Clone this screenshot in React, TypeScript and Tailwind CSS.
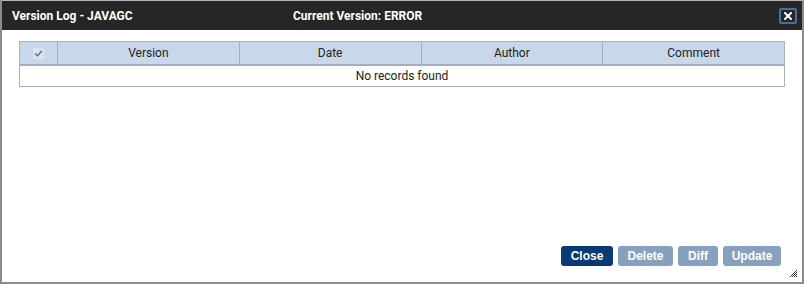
import React from 'react';

const columns = ['Version', 'Date', 'Author', 'Comment'];

const App: React.FC = () => {
  return (
    <div className="w-[804px] h-[284px] bg-white flex flex-col border-t border-t-[#b5b5b5] border-l-2 border-r-2 border-b-2 border-[#8c8c8c] font-['Roboto',sans-serif] overflow-hidden">
      {/* Title bar */}
      <div className="h-[29px] bg-[#262626] flex items-center pl-[10px] pr-[5px] text-white text-[12px] font-bold shrink-0">
        <span className="w-[281px]">Version Log - JAVAGC</span>
        <span className="flex-1">Current Version: ERROR</span>
        <button className="w-[18px] h-[16px] border-2 border-[#4a6da0] rounded-[2px] flex items-center justify-center">
          <svg width="8" height="8" viewBox="0 0 8 8">
            <path d="M1 1 L7 7 M7 1 L1 7" stroke="white" strokeWidth="2" strokeLinecap="square" />
          </svg>
        </button>
      </div>

      {/* Body */}
      <div className="flex-1 flex flex-col px-[17px] pt-[11px] relative">
        <div className="border border-[#a1b1c3] text-[12px] text-[#222]">
          <div className="flex h-[24px] bg-[#c8d8ea] border-b-2 border-[#a1b1c3]">
            <div className="w-[38px] flex items-center justify-center border-r border-[#a1b1c3] shrink-0">
              <div className="w-[11px] h-[11px] bg-[#dce5ef] flex items-center justify-center">
                <svg width="9" height="8" viewBox="0 0 9 8">
                  <path d="M1 4.5 L3.4 6.8 L8 1.8" stroke="#6f7780" strokeWidth="1.6" fill="none" />
                </svg>
              </div>
            </div>
            {columns.map((c, i) => (
              <div
                key={c}
                className={`flex-1 flex items-center justify-center ${i < columns.length - 1 ? 'border-r border-[#a1b1c3]' : ''}`}
              >
                {c}
              </div>
            ))}
          </div>
          <div className="h-[20px] flex items-center justify-center">No records found</div>
        </div>

        <div className="flex-1" />

        <div className="flex justify-end gap-[5px] pr-[4px] pb-[16px] font-['Liberation_Sans',sans-serif] text-[12px] font-bold text-white">
          <button className="h-[20px] w-[52px] rounded-[3px] bg-[#083a73]">Close</button>
          <button className="h-[20px] w-[55px] rounded-[3px] bg-[#87a0bd]">Delete</button>
          <button className="h-[20px] w-[40px] rounded-[3px] bg-[#87a0bd]">Diff</button>
          <button className="h-[20px] w-[58px] rounded-[3px] bg-[#87a0bd]">Update</button>
        </div>

        <svg className="absolute right-[4px] bottom-[4px]" width="9" height="9" viewBox="0 0 9 9">
          <path d="M8 1 L1 8 M8 3 L3 8 M8 5 L5 8 M8 7 L7 8" stroke="#333" strokeWidth="1" />
        </svg>
      </div>
    </div>
  );
};

export default App;
